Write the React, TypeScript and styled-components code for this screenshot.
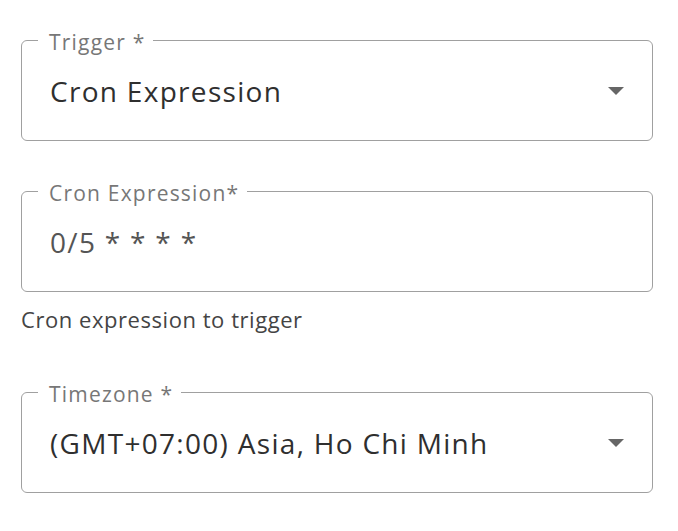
import styled, { createGlobalStyle } from "styled-components";

const GlobalStyle = createGlobalStyle`
  body {
    margin: 0;
    padding: 0;
    background: #ffffff;
    font-family: "Open Sans", "Noto Sans", sans-serif;
  }
`;

const Form = styled.div`
  display: flex;
  flex-direction: column;
  width: 632px;
  padding: 29px 0 0 21px;
`;

const Field = styled.div<{ $gap: number }>`
  display: flex;
  flex-direction: column;
  margin-bottom: ${(p) => p.$gap}px;
`;

const Box = styled.fieldset`
  position: relative;
  margin: 0;
  min-width: 0;
  height: 112px;
  box-sizing: border-box;
  padding: 0 28px;
  border: 1px solid #a0a0a0;
  border-radius: 6px;
`;

const Legend = styled.legend`
  position: relative;
  top: 2px;
  margin-left: -12px;
  padding: 0 8px 0 11px;
  font-size: 21px;
  line-height: 22px;
  color: #777777;
  letter-spacing: 1.2px;
`;

const Value = styled.div<{ $muted?: boolean }>`
  padding-top: 22px;
  font-size: 28px;
  line-height: 36px;
  white-space: nowrap;
  color: ${(p) => (p.$muted ? "#555555" : "#2f2f2f")};
  letter-spacing: 1.3px;
`;

const Caret = styled.span`
  position: absolute;
  right: 28px;
  top: 36px;
  width: 0;
  height: 0;
  border-left: 8.5px solid transparent;
  border-right: 8.5px solid transparent;
  border-top: 8.5px solid #666666;
`;

const Helper = styled.div`
  margin-top: 14px;
  font-size: 22px;
  line-height: 26px;
  color: #444444;
  letter-spacing: 0.55px;
`;

type SelectProps = { label: string; value: string };

function SelectField({ label, value }: SelectProps) {
  return (
    <Box>
      <Legend>{label}</Legend>
      <Value>{value}</Value>
      <Caret />
    </Box>
  );
}

export default function App() {
  return (
    <Form>
      <GlobalStyle />
      <Field $gap={39}>
        <SelectField label="Trigger *" value="Cron Expression" />
      </Field>
      <Field $gap={49}>
        <Box>
          <Legend>Cron Expression*</Legend>
          <Value $muted>0/5 * * * *</Value>
        </Box>
        <Helper>Cron expression to trigger</Helper>
      </Field>
      <Field $gap={0}>
        <SelectField label="Timezone *" value="(GMT+07:00) Asia, Ho Chi Minh" />
      </Field>
    </Form>
  );
}
